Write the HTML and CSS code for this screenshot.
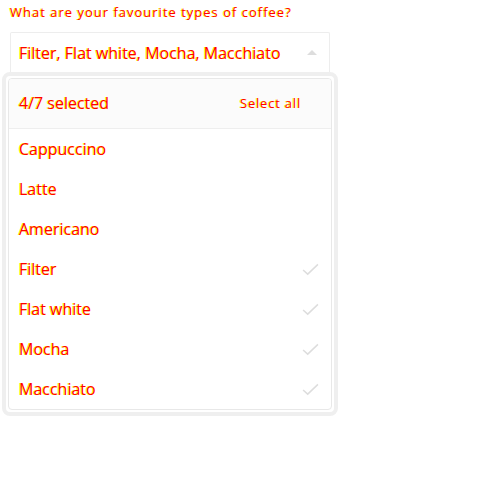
FILE: index.html
```html
<!DOCTYPE html>
<html>
<head>
<meta charset="utf-8">
<link rel="stylesheet" href="styles.css">
</head>
<body>
<div class="field">
  <div class="label">What are your favourite types of coffee?</div>
  <div class="select">
    <span class="value">Filter, Flat white, Mocha, Macchiato</span>
    <span class="caret"></span>
  </div>
  <div class="menu">
    <div class="menu-inner">
      <div class="menu-head">
        <span class="count">4/7 selected</span>
        <span class="all">Select all</span>
      </div>
      <div class="item"><span>Cappuccino</span></div>
      <div class="item"><span>Latte</span></div>
      <div class="item"><span>Americano</span></div>
      <div class="item"><span>Filter</span><svg class="check" viewBox="0 0 18 14"><path d="M1 7.5 L6 12 L17 1.5"/></svg></div>
      <div class="item"><span>Flat white</span><svg class="check" viewBox="0 0 18 14"><path d="M1 7.5 L6 12 L17 1.5"/></svg></div>
      <div class="item"><span>Mocha</span><svg class="check" viewBox="0 0 18 14"><path d="M1 7.5 L6 12 L17 1.5"/></svg></div>
      <div class="item"><span>Macchiato</span><svg class="check" viewBox="0 0 18 14"><path d="M1 7.5 L6 12 L17 1.5"/></svg></div>
    </div>
  </div>
</div>
</body>
</html>
```
FILE: styles.css
```css
* { box-sizing: border-box; }
body {
  margin: 0;
  background: #fff;
  font-family: "Open Sans", Lato, sans-serif;
}
.field {
  padding: 3px 0 0 2px;
  width: 340px;
}
.label {
  margin-left: 8px;
  font-size: 13px;
  line-height: 18px;
  letter-spacing: 1px;
  color: #f00;
  text-shadow: -1px 0 #ff0;
  margin-bottom: 11px;
}
.select {
  margin-left: 8px;
  width: 320px;
  height: 40px;
  border: 1px solid #ededed;
  border-bottom: none;
  border-radius: 2px 2px 0 0;
  display: flex;
  align-items: center;
  justify-content: space-between;
  padding: 0 10px 0 8px;
}
.value {
  font-size: 16px;
  color: #f00;
  text-shadow: -1px 0 #ff0;
}
.caret {
  width: 0;
  height: 0;
  border-left: 5px solid transparent;
  border-right: 5px solid transparent;
  border-bottom: 5px solid #ddd;
  margin-right: 2px;
}
.menu {
  width: 336px;
  border: 4px solid #efefef;
  border-radius: 8px;
  padding: 2px;
  background: #fff;
}
.menu-inner {
  border: 1px solid #e8e8e8;
  border-radius: 4px;
  overflow: hidden;
}
.menu-head {
  height: 50px;
  background: #fbfbfb;
  border-bottom: 1px solid #eee;
  display: flex;
  align-items: center;
  justify-content: space-between;
  padding: 0 30px 2px 10px;
}
.count {
  font-size: 16px;
  color: #f00;
  text-shadow: -1px 0 #ff0;
}
.all {
  font-size: 13px;
  letter-spacing: 0.8px;
  color: #f00;
  text-shadow: -1px 0 #ff0;
}
.item {
  height: 40px;
  display: flex;
  align-items: center;
  justify-content: space-between;
  padding: 0 12px 0 10px;
  font-size: 16px;
  color: #f00;
  text-shadow: -1px 0 #ff0;
}
.check {
  width: 17px;
  height: 13px;
  fill: none;
  stroke: #ddd;
  stroke-width: 1.6;
}
```
